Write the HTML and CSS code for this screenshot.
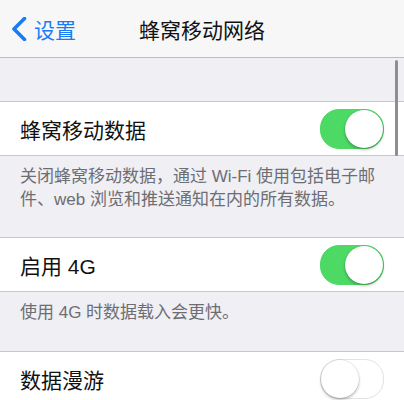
FILE: index.html
```html
<!DOCTYPE html>
<html lang="zh-CN">
<head>
    <meta charset="UTF-8">
    <meta name="viewport" content="width=device-width, initial-scale=1.0">
    <title>蜂窝移动网络</title>
    <link rel="stylesheet" href="styles.css">
</head>
<body>
    <div class="screen">
        <div class="nav-bar">
            <div class="back">
                <svg class="chevron" width="16" height="24" viewBox="0 0 16 24">
                    <path d="M13.5 1.5 L3 12 L13.5 22.5" fill="none" stroke="#1a7cf5" stroke-width="3.6" stroke-linecap="round" stroke-linejoin="round"/>
                </svg>
                <span>设置</span>
            </div>
            <div class="nav-title">蜂窝移动网络</div>
        </div>

        <div class="content">
            <div class="spacer"></div>

            <div class="row">
                <span class="label">蜂窝移动数据</span>
                <div class="switch on"><div class="knob"></div></div>
            </div>
            <div class="footer tall">关闭蜂窝移动数据，通过 Wi-Fi 使用包括电子邮件、web 浏览和推送通知在内的所有数据。</div>

            <div class="row">
                <span class="label">启用 4G</span>
                <div class="switch on"><div class="knob"></div></div>
            </div>
            <div class="footer">使用 4G 时数据载入会更快。</div>

            <div class="row">
                <span class="label">数据漫游</span>
                <div class="switch"><div class="knob"></div></div>
            </div>

            <div class="scrollbar"></div>
        </div>
    </div>
</body>
</html>
```

FILE: styles.css
```css
body {
    margin: 0;
    font-family: "Liberation Sans", "Noto Sans CJK SC", sans-serif;
    background-color: #efeff4;
    overflow: hidden;
}

.screen {
    width: 404px;
    height: 400px;
    overflow: hidden;
}

.nav-bar {
    height: 57px;
    background-color: #f7f7f8;
    border-bottom: 1px solid #bdbdc0;
    display: flex;
    align-items: center;
    position: relative;
}

.back {
    display: flex;
    align-items: center;
    gap: 7px;
    padding-left: 11px;
    color: #1a7cf5;
    font-size: 21px;
}

.nav-title {
    position: absolute;
    left: 0;
    right: 0;
    text-align: center;
    font-size: 21px;
    color: #111;
    pointer-events: none;
}

.content {
    position: relative;
}

.spacer {
    height: 43px;
    border-bottom: 1px solid #c8c7cc;
}

.row {
    height: 53px;
    background-color: #fff;
    border-bottom: 1px solid #c8c7cc;
    display: flex;
    align-items: center;
    justify-content: space-between;
    padding: 0 20px 0 20px;
}

.label {
    font-size: 21px;
    color: #111;
}

.footer {
    height: 50px;
    padding: 9px 8px 0 20px;
    font-size: 17px;
    line-height: 23px;
    color: #6d6d72;
    border-bottom: 1px solid #c8c7cc;
}

.footer.tall {
    height: 72px;
}

.switch {
    width: 62px;
    height: 38px;
    border-radius: 19px;
    border: 1px solid #e3e3e3;
    background-color: #fff;
    position: relative;
}

.switch.on {
    background-color: #4cd964;
    border-color: #4cd964;
}

.knob {
    position: absolute;
    top: 0;
    left: 0;
    width: 38px;
    height: 38px;
    border-radius: 50%;
    background-color: #fff;
    box-shadow: 0 2px 3px rgba(0, 0, 0, 0.25), 0 0 0 0.5px rgba(0, 0, 0, 0.12);
}

.switch.on .knob {
    left: 24px;
}

.scrollbar {
    position: absolute;
    top: 2px;
    right: 6px;
    width: 3px;
    height: 96px;
    border-radius: 2px;
    background-color: #8e8e8e;
}
```
